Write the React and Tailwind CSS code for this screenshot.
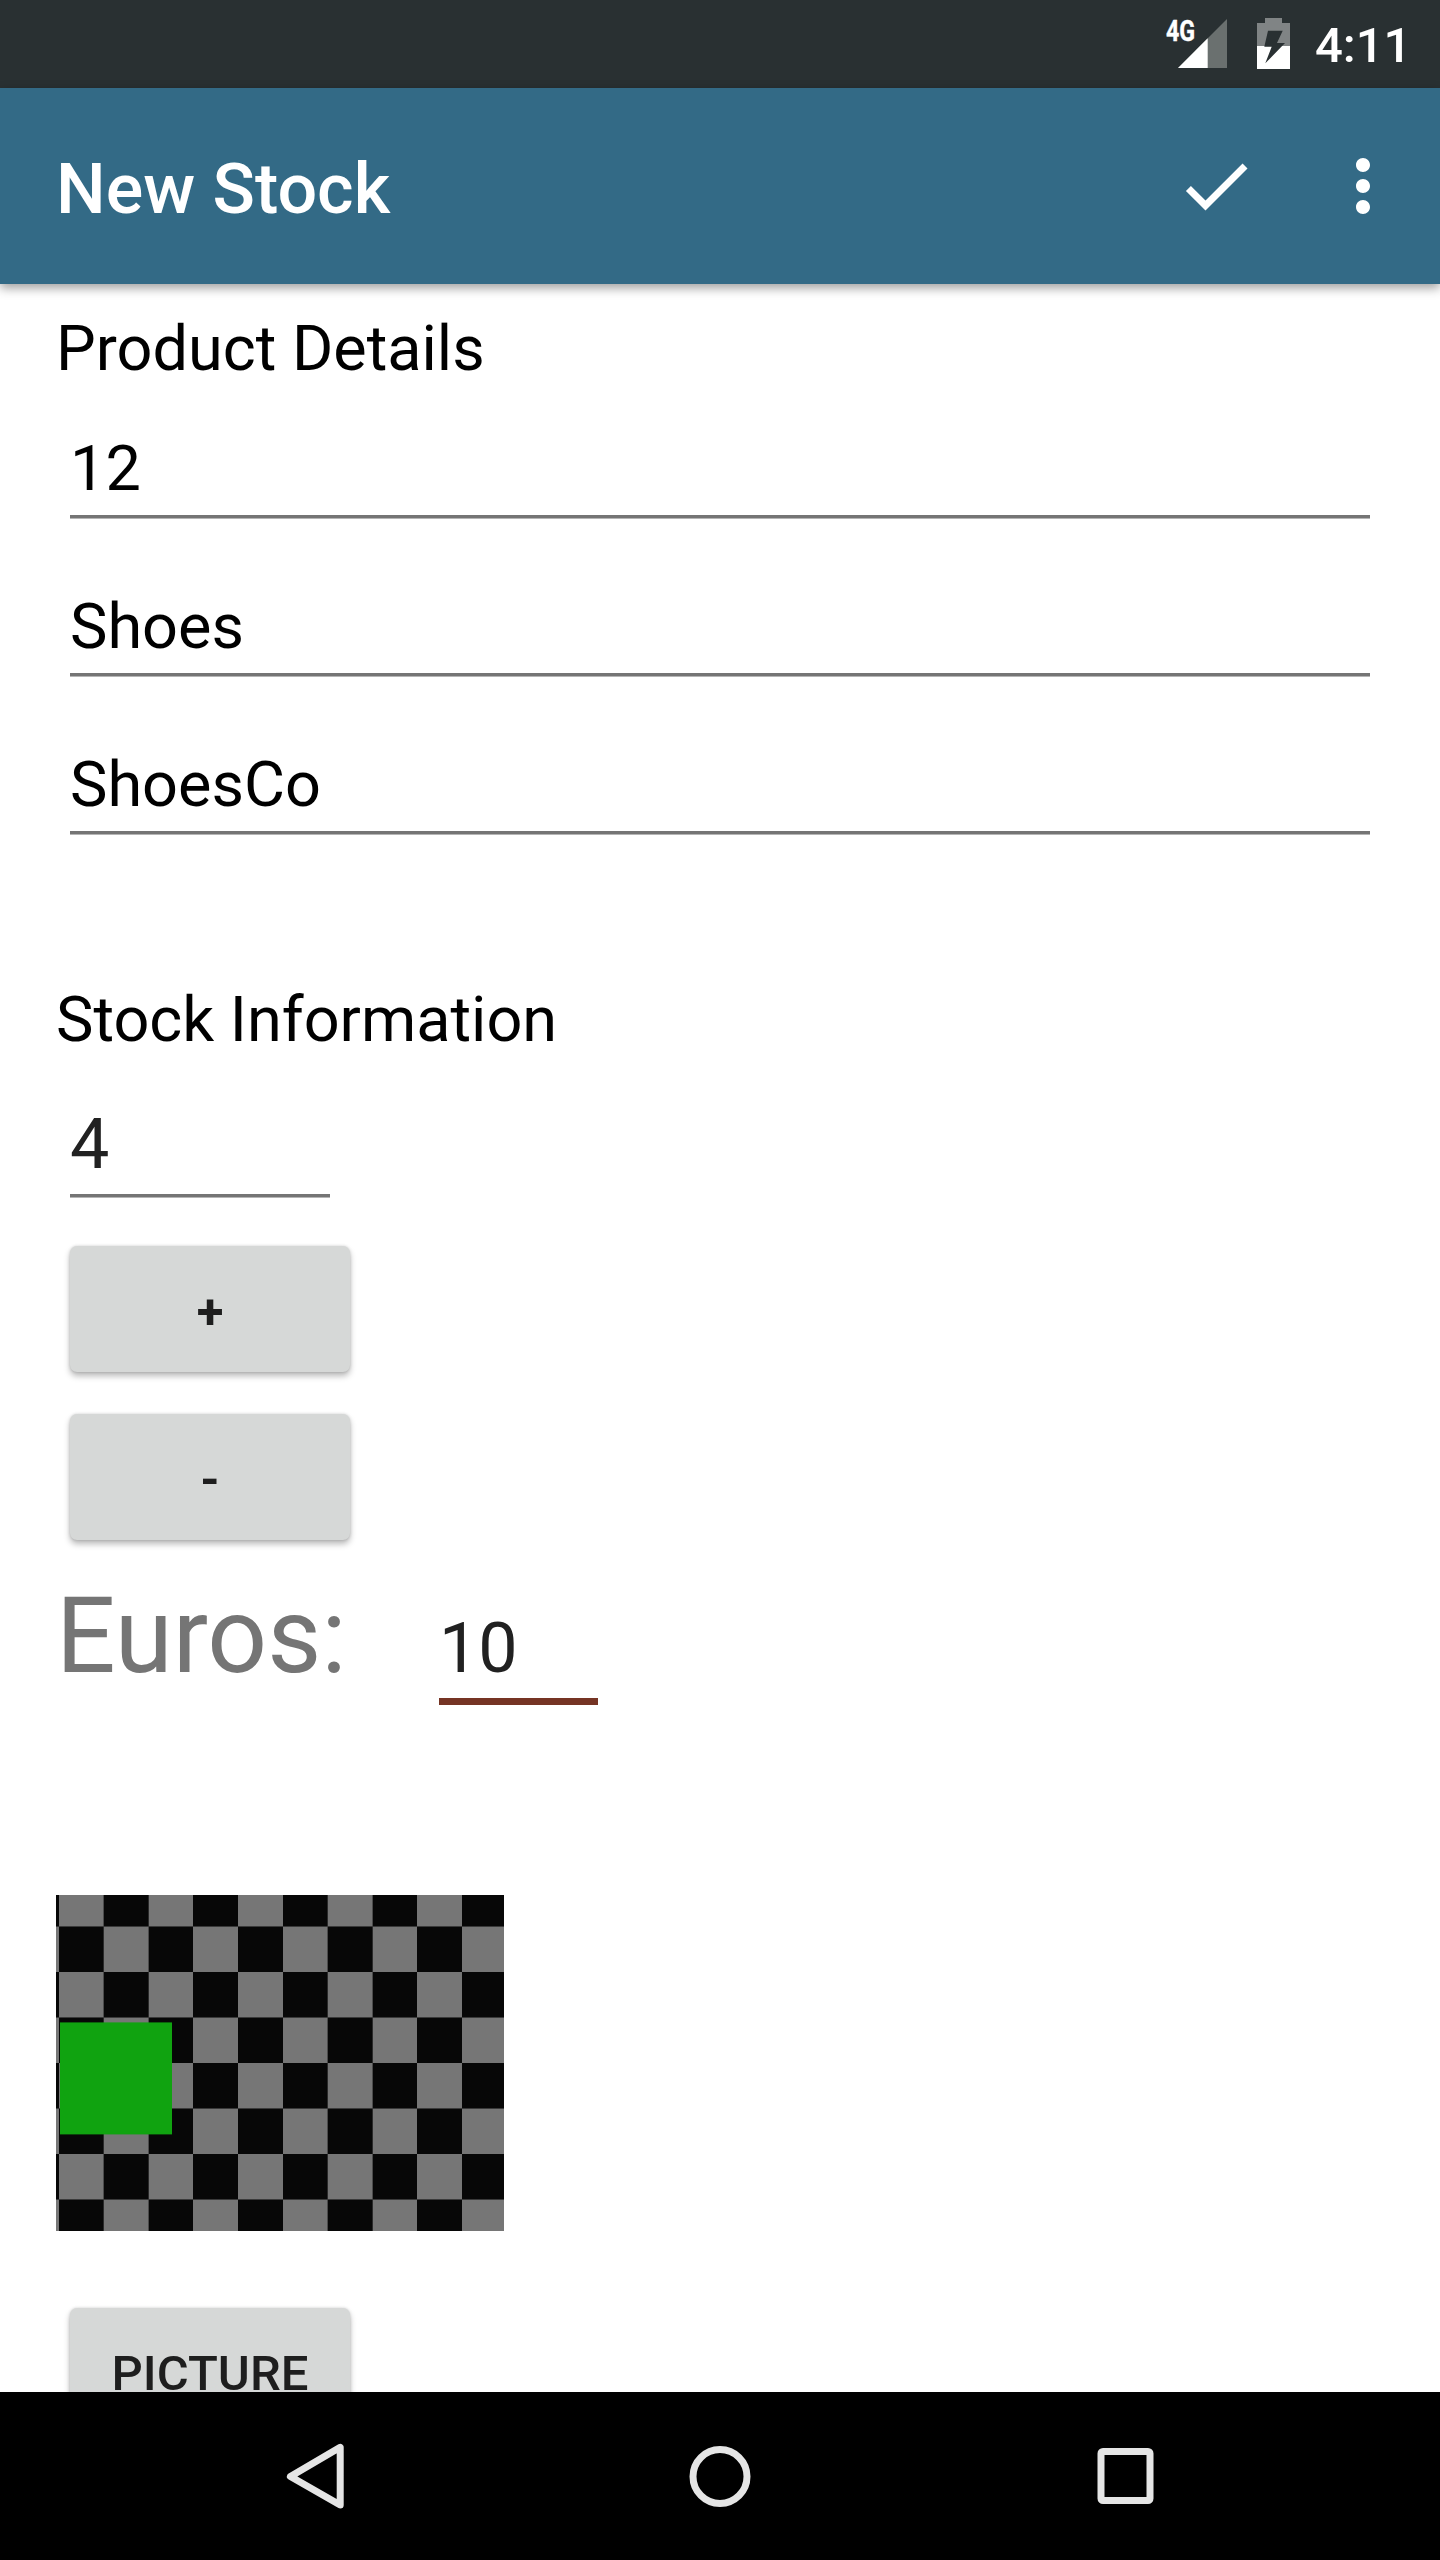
import React from "react";

function StatusBar() {
  return (
    <div className="flex h-[88px] items-start bg-[#293032] text-white">
      <span className="ml-[1166px] mt-[14px] w-[12px] origin-left scale-x-[0.8] text-[29px] font-bold leading-[34px] [-webkit-text-stroke:0.4px_white]">4G</span>
      <svg className="mt-[19px] h-[49px] w-[49px] shrink-0" viewBox="0 0 49 49">
        <path d="M49 0V49H0Z" fill="#6a706f" />
        <path d="M29.7 19.3V49H0Z" fill="#fff" />
      </svg>
      <svg className="ml-[30px] mt-[18px] h-[51px] w-[33px] shrink-0" viewBox="0 0 33 51">
        <path d="M8 0H25V5H33V28H0V5H8Z" fill="#808485" />
        <path d="M0 28H33V51H0Z" fill="#fff" />
        <path d="M11 12.7H25.7L20 25H28L8.3 45.3L14.7 28.7H7.3Z" fill="#293032" />
      </svg>
      <span className="ml-[25px] mt-[17px] text-[49px] font-medium leading-[58px]">4:11</span>
    </div>
  );
}

function AppBar() {
  return (
    <header className="relative z-10 flex h-[196px] items-center bg-[#336a86] pl-14 text-white shadow-[0_4px_10px_rgba(0,0,0,0.38)]">
      <h1 className="flex-1 pt-1.5 text-[70px] font-medium leading-[82px]">New Stock</h1>
      <svg className="h-[84px] w-[84px]" viewBox="0 0 24 24" fill="currentColor">
        <path d="M9 16.17L4.83 12l-1.42 1.41L9 19 21 7l-1.41-1.41z" />
      </svg>
      <svg className="ml-[63px] mr-[35px] h-[84px] w-[84px]" viewBox="0 0 24 24" fill="currentColor">
        <path d="M12 8c1.1 0 2-.9 2-2s-.9-2-2-2-2 .9-2 2 .9 2 2 2zm0 2c-1.1 0-2 .9-2 2s.9 2 2 2 2-.9 2-2-.9-2-2-2zm0 6c-1.1 0-2 .9-2 2s.9 2 2 2 2-.9 2-2-.9-2-2-2z" />
      </svg>
    </header>
  );
}

function TextField({ value }) {
  return (
    <div className="mx-3.5">
      <div className="mb-[9px] text-[63px] leading-[74px] text-black">{value}</div>
      <div className="h-1 border-b border-[#b5b5b5] bg-[#757575]" />
    </div>
  );
}

function Button({ children, bold = false }) {
  return (
    <button
      className={`${bold ? "font-bold" : "font-medium"} ml-3.5 flex h-[126px] w-[280px] shrink-0 items-center justify-center rounded-[7px] bg-[#d6d8d7] pt-1.5 text-[49px] leading-[58px] text-[#1e1e1e] shadow-[0_4px_6px_rgba(0,0,0,0.28),0_0_3px_rgba(0,0,0,0.16)]`}
    >
      {children}
    </button>
  );
}

function Preview() {
  const cells = [];
  for (let row = 0; row < 8; row++) {
    for (let col = -1; col < 10; col++) {
      if ((row + col) % 2 === 0) {
        const x0 = Math.round(3 + col * 44.8);
        const x1 = Math.round(3 + (col + 1) * 44.8);
        const y0 = Math.round(31.7 + (row - 1) * 45.5);
        const y1 = Math.round(31.7 + row * 45.5);
        cells.push(<rect key={`${row}:${col}`} x={x0} y={y0} width={x1 - x0} height={y1 - y0} fill="#767676" />);
      }
    }
  }
  return (
    <svg className="h-[336px] w-[448px] shrink-0" viewBox="0 0 448 336">
      <rect width="448" height="336" fill="#070707" />
      {cells}
      <path d="M0 31.5H448M0 122.5H448M0 213.5H448M0 304.5H448" stroke="#3a3a3a" strokeWidth="1" />
      <path d="M47.5 0V336M92.5 0V336M271.5 0V336M316.5 0V336" stroke="#3a3a3a" strokeWidth="1" strokeOpacity="0.7" />
      <rect x="4" y="127.4" width="112" height="112" fill="#10a310" />
    </svg>
  );
}

function NavBar() {
  return (
    <nav className="flex h-[168px] items-center bg-black">
      <svg className="ml-[280px] h-[70px] w-[70px]" viewBox="0 0 70 70" fill="none" stroke="#e5e5e5" strokeWidth="7" strokeLinejoin="round">
        <path d="M60.2 6.3V64L10.4 35.5Z" />
      </svg>
      <svg className="ml-[335px] h-[70px] w-[70px]" viewBox="0 0 70 70" fill="none" stroke="#e5e5e5" strokeWidth="7">
        <circle cx="35" cy="35.5" r="27" />
      </svg>
      <svg className="ml-[335px] h-[70px] w-[70px]" viewBox="0 0 70 70" fill="none" stroke="#e5e5e5" strokeWidth="7">
        <rect x="11" y="10.5" width="49" height="49" rx="2" />
      </svg>
    </nav>
  );
}

export default function App() {
  return (
    <div className="flex h-[2560px] w-[1440px] flex-col overflow-hidden bg-white font-['Roboto',sans-serif]">
      <StatusBar />
      <AppBar />
      <main className="flex h-[2108px] flex-col overflow-hidden px-14 pt-7">
        <h2 className="text-[63px] leading-[74px] text-black">Product Details</h2>
        <div className="mt-[46px] flex flex-col gap-[71px]">
          <TextField value="12" />
          <TextField value="Shoes" />
          <TextField value="ShoesCo" />
        </div>
        <h2 className="mt-[148px] text-[63px] leading-[74px] text-black">Stock Information</h2>
        <div className="ml-3.5 mt-[46px] w-[260px]">
          <div className="mb-[9px] text-[70px] leading-[82px] text-[#212121]">4</div>
          <div className="h-1 border-b border-[#b5b5b5] bg-[#757575]" />
        </div>
        <div className="mt-12 flex flex-col gap-[42px]">
          <Button bold>+</Button>
          <Button bold>-</Button>
        </div>
        <div className="mt-[35px] flex items-end">
          <span className="mb-[6px] w-[383px] text-[105px] leading-[124px] text-[#757575]">Euros:</span>
          <div className="w-[159px]">
            <div className="mb-[9px] text-[70px] leading-[82px] text-[#212121]">10</div>
            <div className="h-[7px] bg-[#753424]" />
          </div>
        </div>
        <div className="mb-[77px] mt-[190px] flex">
          <Preview />
        </div>
        <Button>PICTURE</Button>
      </main>
      <NavBar />
    </div>
  );
}
